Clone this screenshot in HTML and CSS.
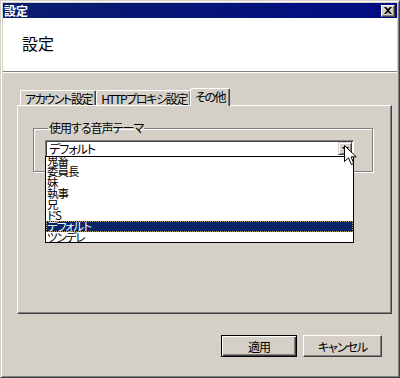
FILE: index.html
```html
<!DOCTYPE html>
<html lang="ja">
<head>
    <meta charset="UTF-8">
    <title>設定</title>
    <link rel="stylesheet" href="styles.css">
</head>
<body>
    <div class="window">
        <div class="titlebar">
            <span class="title">設定</span>
            <span class="close-btn">
                <svg width="8" height="7" viewBox="0 0 8 7"><path d="M0 0h2l2 2 2-2h2L5 3.5 8 7H6L4 5 2 7H0l3-3.5z" fill="#000"/></svg>
            </span>
        </div>
        <div class="header">設定</div>
        <div class="content">
            <div class="tabs">
                <div class="tab">アカウント設定</div>
                <div class="tab">HTTPプロキシ設定</div>
                <div class="tab selected">その他</div>
            </div>
            <div class="panel">
                <fieldset class="group">
                    <legend>使用する音声テーマ</legend>
                    <div class="combo">
                        <span class="combo-text">デフォルト</span>
                        <span class="combo-btn">
                            <svg width="7" height="4" viewBox="0 0 7 4"><path d="M0 0h7L3.5 4z" fill="#000"/></svg>
                        </span>
                        <div class="droplist">
                            <div class="items">
                                <div class="item">鬼畜</div>
                                <div class="item">委員長</div>
                                <div class="item">妹</div>
                                <div class="item">執事</div>
                                <div class="item">兄</div>
                                <div class="item">ドS</div>
                                <div class="item active">デフォルト</div>
                                <div class="item">ツンデレ</div>
                            </div>
                        </div>
                    </div>
                </fieldset>
            </div>
            <div class="buttons">
                <button class="btn default">適用</button>
                <button class="btn">キャンセル</button>
            </div>
        </div>
        <svg class="cursor" width="13" height="22" viewBox="0 0 13 22">
            <path d="M0.5 0.5V16.5L4.5 12.8L7.3 19.5L9.8 18.4L7.1 11.9H12.2Z" fill="#fff" stroke="#000" stroke-width="1"/>
        </svg>
    </div>
</body>
</html>
```

FILE: styles.css
```css
body { margin: 0; font-family: "Noto Sans CJK JP", sans-serif; font-size: 12px; font-feature-settings: "palt"; color: #000; }
.window {
    width: 400px;
    height: 378px;
    box-sizing: border-box;
    background: #d4d0c8;
    border: 1px solid;
    border-color: #d4d0c8 #404040 #404040 #d4d0c8;
    box-shadow: inset 1px 1px #fff, inset -1px -1px #808080;
    padding: 2px;
    display: flex;
    flex-direction: column;
    position: relative;
}
.titlebar {
    height: 15px;
    background: linear-gradient(to right, #0a1e6c, #020c84);
    display: flex;
    align-items: center;
    justify-content: space-between;
    padding: 0 2px 0 1px;
}
.title { color: #fff; font-weight: bold; font-size: 12px; line-height: 15px; }
.close-btn {
    width: 12px;
    height: 10px;
    background: #d4d0c8;
    border: 1px solid;
    border-color: #fff #404040 #404040 #fff;
    box-shadow: inset -1px -1px #808080;
    display: flex;
    align-items: center;
    justify-content: center;
}
.header {
    height: 38px;
    background: #fff;
    padding: 15px 0 0 19px;
    font-size: 16px;
    line-height: 20px;
    border-bottom: 1px solid #808080;
}
.content {
    flex: 1;
    border-top: 1px solid #fff;
    padding: 15px 5px 0 14px;
    letter-spacing: -1px;
}
.tabs { display: flex; align-items: flex-end; height: 17px; padding-left: 3px; letter-spacing: -1.4px; }
.tab {
    height: 15px;
    line-height: 15px;
    padding: 0 3px 0 4px;
    border-left: 1px solid #fff;
    border-top: 1px solid #fff;
    border-right: 1px solid #404040;
    border-top-left-radius: 2px;
    border-top-right-radius: 2px;
    box-shadow: inset -1px 0 #808080;
    box-sizing: border-box;
}
.tab.selected {
    height: 18px;
    line-height: 16px;
    margin-bottom: -1px;
    margin-left: -1px;
    padding: 0 4px;
    background: #d4d0c8;
    position: relative;
    z-index: 1;
}
.panel {
    height: 209px;
    width: 375px;
    box-sizing: border-box;
    border: 1px solid;
    border-color: #fff #404040 #404040 #fff;
    box-shadow: inset -1px -1px #808080;
    padding: 16px 0 0 15px;
}
.group {
    margin: 0;
    width: 340px;
    height: 50px;
    box-sizing: border-box;
    border: 1px solid #808080;
    box-shadow: inset 1px 1px #fff, 1px 1px #fff;
    padding: 6px 0 0 11px;
    position: relative;
}
.group legend { padding: 0 1px; margin-left: 3px; line-height: 12px; }
.combo {
    width: 309px;
    height: 17px;
    box-sizing: border-box;
    background: #fff;
    border: 1px solid;
    border-color: #808080 #fff #fff #808080;
    box-shadow: inset 1px 1px #404040;
    display: flex;
    align-items: center;
    justify-content: space-between;
    position: relative;
}
.combo-text { padding-left: 3px; line-height: 14px; }
.combo-btn {
    width: 14px;
    height: 13px;
    margin-right: 1px;
    box-sizing: border-box;
    background: #d4d0c8;
    border: 1px solid;
    border-color: #d4d0c8 #404040 #404040 #d4d0c8;
    box-shadow: inset 1px 1px #fff, inset -1px -1px #808080;
    display: flex;
    align-items: center;
    justify-content: center;
}
.droplist {
    position: absolute;
    top: 15px;
    left: -1px;
    width: 309px;
    height: 87px;
    box-sizing: border-box;
    background: #fff;
    border: 1px solid #000;
    overflow: hidden;
    z-index: 2;
}
.items { margin-top: -2px; }
.item { height: 11px; line-height: 11px; padding-left: 1px; white-space: nowrap; font-size: 11.5px; }
.item.active {
    background: #0a246a;
    color: #fff;
    outline: 1px dotted #b0a060;
    outline-offset: -1px;
}
.buttons { display: flex; justify-content: flex-end; gap: 6px; margin-top: 21px; padding-right: 10px; }
.btn {
    font-family: inherit;
    font-size: 12px;
    font-feature-settings: "palt";
    letter-spacing: -1px;
    height: 22px;
    width: 79px;
    background: #d4d0c8;
    border: 1px solid;
    border-color: #fff #404040 #404040 #fff;
    box-shadow: inset -1px -1px #808080;
    padding: 0;
    color: #000;
}
.btn.default {
    width: 76px;
    border: 1px solid #000;
    box-shadow: inset 1px 1px #fff, inset -1px -1px #404040, inset -2px -2px #808080;
}
.cursor { position: absolute; left: 343px; top: 144px; z-index: 5; }
```
